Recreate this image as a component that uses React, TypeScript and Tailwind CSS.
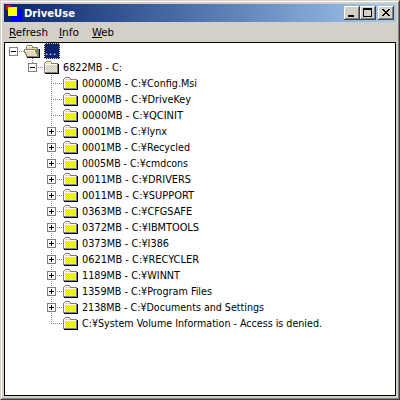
import React from "react";

type Row = { text: string; width: number; expandable?: boolean };

const rows: Row[] = [
  { text: "0000MB - C:¥Config.Msi", width: 115 },
  { text: "0000MB - C:¥DriveKey", width: 109 },
  { text: "0000MB - C:¥QCINIT", width: 101 },
  { text: "0001MB - C:¥lynx", width: 85, expandable: true },
  { text: "0001MB - C:¥Recycled", width: 108, expandable: true },
  { text: "0005MB - C:¥cmdcons", width: 106, expandable: true },
  { text: "0011MB - C:¥DRIVERS", width: 109, expandable: true },
  { text: "0011MB - C:¥SUPPORT", width: 112, expandable: true },
  { text: "0363MB - C:¥CFGSAFE", width: 110, expandable: true },
  { text: "0372MB - C:¥IBMTOOLS", width: 117, expandable: true },
  { text: "0373MB - C:¥I386", width: 87, expandable: true },
  { text: "0621MB - C:¥RECYCLER", width: 117, expandable: true },
  { text: "1189MB - C:¥WINNT", width: 98, expandable: true },
  { text: "1359MB - C:¥Program Files", width: 130, expandable: true },
  { text: "2138MB - C:¥Documents and Settings", width: 182, expandable: true },
  { text: "C:¥System Volume Information - Access is denied.", width: 240 },
];

/** Text stretched to a fixed advance width on a 16px line. */
function Label({ text, width, bold, fill = "#000", under }: { text: string; width: number; bold?: boolean; fill?: string; under?: number }) {
  return (
    <svg width={width + 2} height="16" className="block shrink-0 overflow-visible" shapeRendering="crispEdges">
      <text x="0" y="12" textLength={width} lengthAdjust="spacingAndGlyphs" fontSize="11" fontWeight={bold ? 700 : 400} fill={fill} fontFamily="'DejaVu Sans Condensed','DejaVu Sans',sans-serif">
        {text}
      </text>
      {under && <rect x="0" y="13" width={under} height="1" fill={fill} />}
    </svg>
  );
}

/** Shared 2x2 checkerboard fills for the folder bodies. */
function DitherDefs() {
  return (
    <svg width="0" height="0" className="absolute">
      <defs>
        <pattern id="dither" width="2" height="2" patternUnits="userSpaceOnUse">
          <rect width="2" height="2" fill="#ffff00" />
          <path d="M0 0h1v1H0zM1 1h1v1H1z" fill="#d4d0c8" shapeRendering="crispEdges" />
        </pattern>
        <pattern id="dither-odd" width="2" height="2" patternUnits="userSpaceOnUse">
          <rect width="2" height="2" fill="#ffff00" />
          <path d="M1 0h1v1H1zM0 1h1v1H0z" fill="#d4d0c8" shapeRendering="crispEdges" />
        </pattern>
      </defs>
    </svg>
  );
}

function Expander() {
  return (
    <svg width="9" height="16" className="block shrink-0" shapeRendering="crispEdges">
      <rect x="0.5" y="4.5" width="8" height="8" fill="#fff" stroke="#808080" />
      <path d="M2 8h5v1H2z" />
    </svg>
  );
}

function Dots({ width }: { width: number }) {
  return (
    <svg width={width} height="16" className="block shrink-0" shapeRendering="crispEdges">
      <path d={`M1 8.5H${width}`} stroke="#808080" strokeDasharray="1 1" />
    </svg>
  );
}

function Folder() {
  return (
    <svg width="16" height="16" className="block shrink-0" shapeRendering="crispEdges">
      <path d="M2 14h13V5h1v10H2z" fill="#000" />
      <path d="M3 2h5v1h1v1h6v10H1V4h1V3h1z" fill="#808080" />
      <path d="M3 3h5v1H3zM2 4h1v9H2zM3 5h11v1H3z" fill="#fff" />
      <path d="M3 4h5v1H3zM3 6h11v7H3z" fill="url(#dither)" />
    </svg>
  );
}

function OpenFolder() {
  return (
    <svg width="16" height="16" className="block shrink-0" shapeRendering="crispEdges">
      <path d="M3 14h12V6h1v9H3z" />
      <path d="M8 15h1v1H8z" fill="#808080" />
      <path d="M3 2h5v1h1v1h5v2h1v8H2v-2H1v-2H0V6h2V3h1z" fill="#808080" />
      <path d="M3 4h5v1h5v1H3z" fill="url(#dither-odd)" />
      <path d="M1 7h10v2h1v2h1v2H3v-2H2V9H1z" fill="url(#dither-odd)" />
      <path d="M3 3h5v1H3zM1 7h10v1H2v1H1z" fill="#fff" />
    </svg>
  );
}

function TitleButton({ kind }: { kind: "min" | "max" | "close" }) {
  return (
    <svg width="16" height="14" className="block shrink-0" shapeRendering="crispEdges">
      <path d="M0 0h16v14H0z" fill="#404040" />
      <path d="M0 0h15v13H0z" fill="#fff" />
      <path d="M1 12h13V1h1v12H1z" fill="#808080" />
      <path d="M1 1h13v11H1z" fill="#d4d0c8" />
      {kind === "min" && <path d="M4 9h6v2H4z" />}
      {kind === "max" && <path d="M3 2h9v9H3zM4 4v6h7V4z" fillRule="evenodd" />}
      {kind === "close" && <path d="M4 3h2v1h1v1h2V4h1V3h2v1h-1v1h-1v1H9v1h1v1h1v1h1v1h-2V9H9V8H7v1H6v1H4V9h1V8h1V7h1V6H6V5H5V4H4z" />}
    </svg>
  );
}

export default function App() {
  return (
    <div className="flex h-[400px] w-[400px] flex-col overflow-hidden border border-t-[#d4d0c8] border-r-[#404040] border-b-[#404040] border-l-[#d4d0c8] bg-[#d4d0c8]">
      <DitherDefs />
      <div className="flex min-h-0 flex-1 flex-col border border-t-white border-r-[#808080] border-b-[#808080] border-l-white p-0.5">
        <header className="flex h-[18px] shrink-0 items-center bg-linear-to-r from-[#0a246a] to-[#a6caf0] pr-0.5 pl-0.5">
          <svg width="16" height="16" className="mr-0.5 shrink-0" shapeRendering="crispEdges">
            <path d="M0 0h5v5H0z" fill="#f00" />
            <path d="M5 4h11v12H5z" fill="#00f" />
            <path d="M2 2h9v9H2z" fill="#ff0" />
          </svg>
          <Label text="DriveUse" width={51} bold fill="#fff" />
          <div className="ml-auto flex">
            <TitleButton kind="min" />
            <TitleButton kind="max" />
            <div className="w-0.5" />
            <TitleButton kind="close" />
          </div>
        </header>
        <nav className="flex h-5 shrink-0 items-center pl-[5px]">
          <Label text="Refresh" width={39} under={7} />
          <div className="w-[9px]" />
          <Label text="Info" width={20} under={4} />
          <div className="w-[11px]" />
          <Label text="Web" width={22} under={10} />
        </nav>
        <main className="flex min-h-0 flex-1 flex-col border border-black bg-white pl-1">
          <div className="flex h-4 shrink-0">
            <Expander />
            <Dots width={6} />
            <OpenFolder />
            <div className="ml-1 h-4 w-4 border border-dotted border-[#f5db95] bg-[#0a246a]">
              <svg width="14" height="14" className="block">
                <text x="0 4 8" y="11" fontSize="11" fill="#fff" fontFamily="'DejaVu Sans Condensed','DejaVu Sans',sans-serif">
                  ...
                </text>
              </svg>
            </div>
          </div>
          <div className="flex h-4 shrink-0 pl-[19px]">
            <svg width="9" height="16" className="block shrink-0" shapeRendering="crispEdges">
              <path d="M4 1h1v1H4zM4 3h1v1H4z" fill="#808080" />
              <rect x="0.5" y="4.5" width="8" height="8" fill="#fff" stroke="#808080" />
              <path d="M2 8h5v1H2z" />
            </svg>
            <Dots width={6} />
            <Folder />
            <div className="w-1" />
            <Label text="6822MB - C:" width={59} />
          </div>
          {rows.map((row, i) => (
            <div key={row.text} className="flex h-4 shrink-0 pl-[38px]">
              <svg width="9" height="16" className="block shrink-0" shapeRendering="crispEdges">
                <path d={i === rows.length - 1 ? "M4.5 0V9" : "M4.5 0V16"} stroke="#808080" strokeDasharray="1 1" />
                {row.expandable ? (
                  <>
                    <rect x="0.5" y="4.5" width="8" height="8" fill="#fff" stroke="#808080" />
                    <path d="M2 8h5v1H2zM4 6h1v5H4z" />
                  </>
                ) : (
                  <path d="M6 8.5H9" stroke="#808080" strokeDasharray="1 1" />
                )}
              </svg>
              <Dots width={6} />
              <Folder />
              <div className="w-1" />
              <Label text={row.text} width={row.width} />
            </div>
          ))}
        </main>
      </div>
    </div>
  );
}
